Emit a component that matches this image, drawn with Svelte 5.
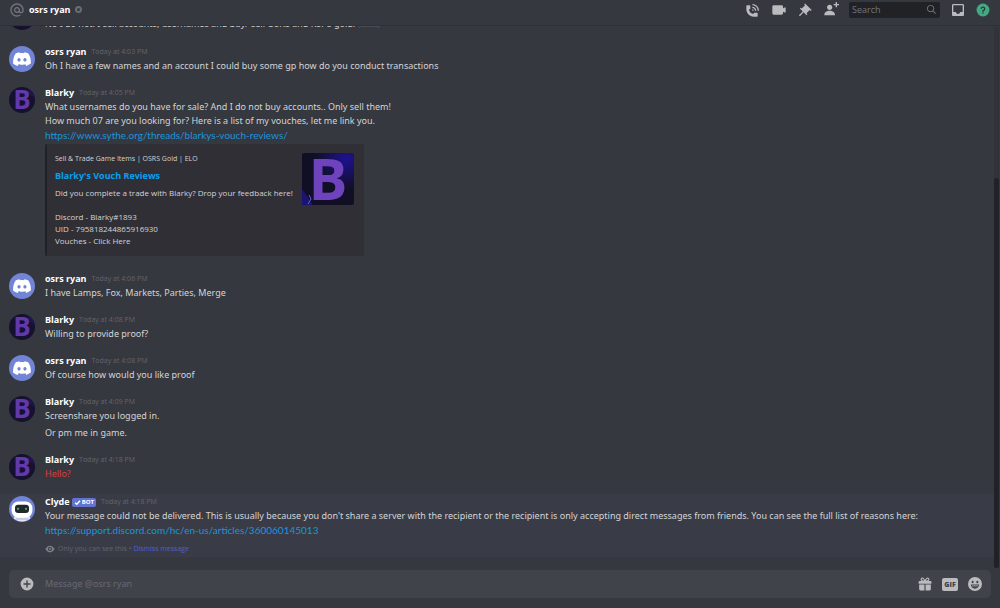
<script lang="ts">
  type Who = 'ryan' | 'blarky' | 'clyde';

  interface Message {
    who: Who;
    time?: string;
    lines: string[];
    link?: string;
    embed?: boolean;
    edited?: boolean;
    failed?: boolean;
    ephemeral?: boolean;
  }

  const names: Record<Who, string> = { ryan: 'osrs ryan', blarky: 'Blarky', clyde: 'Clyde' };

  const messages: Message[] = [
    // scrolled half way under the top bar, so it has no visible heading
    {
      who: 'blarky',
      lines: ['No I do not. I sell accounts, usernames and buy/ sell OSRS and RSPS gold.'],
      edited: true,
    },
    {
      who: 'ryan',
      time: '4:03 PM',
      lines: ['Oh I have a few names and an account I could buy some gp how do you conduct transactions'],
    },
    {
      who: 'blarky',
      time: '4:05 PM',
      lines: [
        'What usernames do you have for sale? And I do not buy accounts.. Only sell them!\nHow much 07 are you looking for? Here is a list of my vouches, let me link you.',
      ],
      link: 'https://www.sythe.org/threads/blarkys-vouch-reviews/',
      embed: true,
    },
    { who: 'ryan', time: '4:06 PM', lines: ['I have Lamps, Fox, Markets, Parties, Merge'] },
    { who: 'blarky', time: '4:08 PM', lines: ['Willing to provide proof?'] },
    { who: 'ryan', time: '4:08 PM', lines: ['Of course how would you like proof'] },
    { who: 'blarky', time: '4:09 PM', lines: ['Screenshare you logged in.', 'Or pm me in game.'] },
    { who: 'blarky', time: '4:18 PM', lines: ['Hello?'], failed: true },
    {
      who: 'clyde',
      time: '4:18 PM',
      lines: [
        "Your message could not be delivered. This is usually because you don't share a server with the recipient or the recipient is only accepting direct messages from friends. You can see the full list of reasons here:",
      ],
      link: 'https://support.discord.com/hc/en-us/articles/360060145013',
      ephemeral: true,
    },
  ];

  const actions = [
    {
      label: 'Start voice call',
      d: 'M11 5V3C16.515 3 21 7.486 21 13H19C19 8.589 15.411 5 11 5ZM17 13H15C15 10.795 13.206 9 11 9V7C14.309 7 17 9.691 17 13ZM11 11V13H13C13 11.896 12.105 11 11 11ZM14 16H18C18.553 16 19 16.447 19 17V21C19 21.553 18.553 22 18 22H13C6.925 22 2 17.075 2 11V6C2 5.447 2.448 5 3 5H7C7.553 5 8 5.447 8 6V10C8 10.553 7.553 11 7 11H6C6.063 14.938 9 18 13 18V17C13 16.447 13.447 16 14 16Z',
    },
    {
      label: 'Start video call',
      d: 'M21.526 8.149C21.231 7.966 20.862 7.951 20.553 8.105L18 9.382V7C18 5.897 17.103 5 16 5H4C2.897 5 2 5.897 2 7V17C2 18.104 2.897 19 4 19H16C17.103 19 18 18.104 18 17V14.618L20.553 15.894C20.694 15.965 20.847 16 21 16C21.183 16 21.365 15.949 21.526 15.851C21.82 15.668 22 15.347 22 15V9C22 8.653 21.82 8.332 21.526 8.149Z',
    },
    {
      label: 'Pinned messages',
      d: 'M22 12L12.101 2.101L10.686 3.514L12.101 4.929L7.151 9.878V9.88L5.736 8.465L4.322 9.88L8.565 14.122L2.908 19.778L4.322 21.192L9.979 15.536L14.222 19.778L15.636 18.364L14.222 16.95L19.171 12H19.172L20.586 13.414L22 12Z',
    },
    {
      label: 'Add friends to DM',
      d: 'M21 3H24V5H21V8H19V5H16V3H19V0H21V3ZM10 12C12.205 12 14 10.205 14 8C14 5.795 12.205 4 10 4C7.795 4 6 5.795 6 8C6 10.205 7.795 12 10 12ZM10 13C5.289 13 2 15.467 2 19V20H18V19C18 15.467 14.711 13 10 13Z',
    },
  ];

  let query = $state('');
  let draft = $state('');
</script>

{#snippet avatar(who: Who)}
  <svg class="avatar" viewBox="0 0 26 26" aria-hidden="true">
    {#if who === 'ryan'}
      <circle cx="13" cy="13" r="13" fill="#7284d6" />
      <path
        transform="translate(3.4 6.2) scale(.685)"
        fill="#fff"
        fill-rule="evenodd"
        d="M23 1.7C21.3.9 19.5.3 17.7 0L17 1.4C15 1.1 13 1.1 11 1.4L10.3 0C8.5.3 6.7.9 5 1.7C1.6 6.8.6 11.8 1.1 16.7C3.1 18.1 5.3 19.3 7.7 20L9.1 17.7C11 18.6 17 18.6 18.9 17.7L20.3 20C22.7 19.3 24.9 18.1 26.9 16.6C27.4 11 26 6 23 1.7ZM9.7 13.6C8.4 13.6 7.3 12.4 7.3 11S8.4 8.3 9.7 8.3S12 9.5 12 11S11 13.6 9.7 13.6ZM18.3 13.6C17 13.6 16 12.4 16 11S17 8.3 18.3 8.3S20.7 9.5 20.7 11S19.6 13.6 18.3 13.6Z"
      />
    {:else if who === 'blarky'}
      <circle cx="13" cy="13" r="13" fill="#15112f" />
      <path d="M18 1.1A13 13 0 0 1 25.8 11L21 8Z" fill="#1b1552" />
      <text x="13" y="22" text-anchor="middle" font-size="26" font-weight="700" fill="#6239aa">B</text>
    {:else}
      <circle cx="13" cy="13" r="13" fill="#7284d6" />
      <path d="M5 20.5H21V22.8A13 13 0 0 1 5 22.8Z" fill="#e4e7f2" />
      <rect x="2.6" y="5.5" width="20.8" height="16" rx="6.5" fill="#fff" />
      <rect x="6" y="8.8" width="14" height="8.2" rx="3.2" fill="#23272a" />
      <circle cx="9" cy="12.8" r="1.1" fill="#43b581" />
      <circle cx="17" cy="12.8" r="1.1" fill="#43b581" />
      <path d="M7 23H19" stroke="#9aa5dc" stroke-width=".8" />
    {/if}
  </svg>
{/snippet}

<div class="app">
  <header class="topbar">
    <svg class="at" viewBox="0 0 24 24" aria-hidden="true">
      <path
        d="M12 2C6.486 2 2 6.486 2 12C2 17.515 6.486 22 12 22C14.039 22 15.993 21.398 17.652 20.259L16.521 18.611C15.195 19.519 13.633 20 12 20C7.589 20 4 16.411 4 12C4 7.589 7.589 4 12 4C16.411 4 20 7.589 20 12V12.782C20 14.17 19.402 15 18.4 15C17.437 15 16.6 14.182 16.6 13.631V12C16.6 9.464 14.537 7.4 12 7.4C9.463 7.4 7.4 9.463 7.4 12C7.4 14.537 9.463 16.6 12 16.6C13.234 16.6 14.35 16.106 15.177 15.313C15.826 16.269 16.93 17 18.4 17C20.552 17 22 15.306 22 12.782V12C22 6.486 17.514 2 12 2ZM12 14.599C10.566 14.599 9.4 13.433 9.4 12C9.4 10.567 10.566 9.4 12 9.4C13.434 9.4 14.6 10.566 14.6 12C14.6 13.434 13.434 14.599 12 14.599Z"
      />
    </svg>
    <h1>osrs ryan</h1>
    <span class="status" role="img" aria-label="Offline"></span>

    <div class="tools">
      {#each actions as action (action.label)}
        <button type="button" aria-label={action.label}>
          <svg viewBox="0 0 24 24"><path d={action.d} /></svg>
        </button>
      {/each}
      <label class="search">
        <input type="text" placeholder="Search" aria-label="Search" bind:value={query} />
        <svg viewBox="0 0 24 24" aria-hidden="true">
          <path
            d="M21.707 20.293L16.314 14.9C17.403 13.504 18 11.799 18 10C18 5.6 14.4 2 10 2S2 5.6 2 10S5.6 18 10 18C11.799 18 13.504 17.404 14.9 16.314L20.293 21.706L21.707 20.293ZM10 16C6.7 16 4 13.3 4 10S6.7 4 10 4S16 6.7 16 10S13.3 16 10 16Z"
          />
        </svg>
      </label>
      <button type="button" aria-label="Inbox">
        <svg viewBox="0 0 24 24">
          <path
            d="M19 3H4.99C3.88 3 3.01 3.89 3.01 5L3 19C3 20.1 3.88 21 4.99 21H19C20.1 21 21 20.1 21 19V5C21 3.89 20.1 3 19 3ZM19 15H15C15 16.66 13.65 18 12 18C10.35 18 9 16.66 9 15H4.99V5H19V15Z"
          />
        </svg>
      </button>
      <button type="button" class="help" aria-label="Help">
        <svg viewBox="0 0 24 24">
          <circle cx="12" cy="12" r="11" />
          <path
            class="mark"
            d="M12 18.25A1.25 1.25 0 1 1 12 15.75A1.25 1.25 0 0 1 12 18.25ZM13 13.875V15H11V12H12C13.104 12 14 11.103 14 10C14 8.896 13.104 8 12 8C10.896 8 10 8.896 10 10H8C8 7.795 9.795 6 12 6C14.205 6 16 7.795 16 10C16 11.861 14.723 13.429 13 13.875Z"
          />
        </svg>
      </button>
    </div>
  </header>

  <main class="chat">
    <div class="log">
      {#each messages as msg, i (i)}
        <article class="message" class:ephemeral={msg.ephemeral} class:headless={!msg.time}>
          {@render avatar(msg.who)}
          <div class="body">
            {#if msg.time}
              <h2>
                <span class="author">{names[msg.who]}</span>
                {#if msg.who === 'clyde'}
                  <span class="bot">
                    <svg viewBox="0 0 10 10" aria-hidden="true"><path d="M1.5 5.2L4 7.6L8.6 2.4" /></svg>BOT
                  </span>
                {/if}
                <time>Today at {msg.time}</time>
              </h2>
            {/if}
            {#each msg.lines as line (line)}
              <p class="text" class:failed={msg.failed}>
                {line}{#if msg.edited}<small class="edited">(edited)</small>{/if}
              </p>
            {/each}
            {#if msg.link}
              <a class="url" href={msg.link}>{msg.link}</a>
            {/if}
            {#if msg.embed}
              <section class="embed">
                <div class="embed-text">
                  <span class="provider">Sell &amp; Trade Game Items | OSRS Gold | ELO</span>
                  <a class="title" href={msg.link}>Blarky's Vouch Reviews</a>
                  <p class="description">{'Did you complete a trade with Blarky? Drop your feedback here!\n\nDiscord - Blarky#1893\nUID - 795818244865916930\nVouches - Click Here'}</p>
                </div>
                <svg class="thumb" viewBox="0 0 52 52" role="img" aria-label="Blarky logo">
                  <defs>
                    <radialGradient id="glow" cx="0.85" cy="0.1" r="0.6">
                      <stop offset="0" stop-color="#1d1290" />
                      <stop offset="1" stop-color="#110f26" />
                    </radialGradient>
                  </defs>
                  <rect width="52" height="52" rx="2" fill="url(#glow)" />
                  <path d="M0 36L5 43L11 52H0Z" fill="#1c1474" />
                  <path d="M7 42L9 46L6 51" stroke="#6a5fd0" fill="none" />
                  <text x="26" y="47" text-anchor="middle" font-size="58" font-weight="700" fill="#6f43bd">B</text>
                </svg>
              </section>
            {/if}
            {#if msg.ephemeral}
              <div class="notice">
                <svg viewBox="0 0 24 24" aria-hidden="true">
                  <path
                    fill-rule="evenodd"
                    d="M12 4C5 4 1 12 1 12S5 20 12 20S23 12 23 12S19 4 12 4ZM12 17A5 5 0 1 1 12 7A5 5 0 0 1 12 17ZM12 14.5A2.5 2.5 0 1 0 12 9.5A2.5 2.5 0 0 0 12 14.5Z"
                  />
                </svg>
                <span>Only you can see this •</span>
                <button type="button">Dismiss message</button>
              </div>
            {/if}
          </div>
        </article>
      {/each}
    </div>
    <div class="scrollbar" aria-hidden="true"><div class="thumb-bar"></div></div>
  </main>

  <form class="composer">
    <button type="button" aria-label="Attach file">
      <svg viewBox="0 0 24 24">
        <path
          fill-rule="evenodd"
          d="M12 1A11 11 0 1 0 12 23A11 11 0 0 0 12 1ZM18 13.2H13.2V18H10.8V13.2H6V10.8H10.8V6H13.2V10.8H18Z"
        />
      </svg>
    </button>
    <input type="text" placeholder="Message @osrs ryan" aria-label="Message @osrs ryan" bind:value={draft} />
    <button type="button" aria-label="Send a gift">
      <svg viewBox="0 0 24 24">
        <path d="M2 13H11V23H4Q2 23 2 21ZM13 13H22V21Q22 23 20 23H13ZM2.5 7H21.5Q23 7 23 8.5V11.5H1V8.5Q1 7 2.5 7Z" />
        <path d="M11.5 7C6 7 5 5 5.5 3.3C6.3 1 10.5 1.5 11.5 7ZM12.5 7C18 7 19 5 18.5 3.3C17.7 1 13.5 1.5 12.5 7Z" fill="none" stroke="currentColor" stroke-width="2" />
      </svg>
    </button>
    <button type="button" class="gif" aria-label="Open GIF picker">GIF</button>
    <button type="button" aria-label="Select emoji">
      <svg viewBox="0 0 24 24">
        <path
          fill-rule="evenodd"
          d="M12 0A12 12 0 1 0 12 24A12 12 0 0 0 12 0ZM8 6.5A1.7 1.9 0 1 1 8 10.5A1.7 1.9 0 1 1 8 6.5ZM16 6.5A1.7 1.9 0 1 1 16 10.5A1.7 1.9 0 1 1 16 6.5ZM4.8 13H19.2C19 17 16 20 12 20S5 17 4.8 13ZM7 14.5V16H17V14.5Z"
        />
      </svg>
    </button>
  </form>
</div>

<style>
  :global(body) {
    margin: 0;
    background: #36383f;
  }
  .app {
    --ink: #d3d4d7;
    --muted: #62656d;
    --icon: #b9bbbe;
    --link: #1b95dc;
    display: flex;
    flex-direction: column;
    height: 100vh;
    color: var(--ink);
    font: 9px/14px 'Open Sans', 'Noto Sans', sans-serif;
    background: #36383f;
  }
  h1,
  h2,
  p {
    margin: 0;
    font-size: inherit;
    font-weight: inherit;
  }
  button {
    display: grid;
    place-items: center;
    padding: 0;
    color: var(--icon);
    font: inherit;
    background: none;
    border: 0;
    cursor: pointer;
  }
  input {
    min-width: 0;
    padding: 0;
    color: var(--ink);
    font: inherit;
    background: none;
    border: 0;
    outline: 0;
  }
  svg {
    display: block;
    flex: none;
    fill: currentColor;
  }
  a {
    color: var(--link);
    text-decoration: none;
  }

  .topbar {
    display: flex;
    flex: none;
    align-items: center;
    box-sizing: border-box;
    height: 26px;
    padding: 0 10px 6px 9px;
    border-bottom: 1px solid #2e3036;
  }
  .at {
    width: 16px;
    height: 16px;
    color: #72757e;
  }
  h1 {
    margin-left: 4px;
    color: #fff;
    font-weight: 700;
  }
  .status {
    width: 3px;
    height: 3px;
    margin-left: 4px;
    border: 2px solid #686c75;
    border-radius: 50%;
  }
  .tools {
    display: flex;
    align-items: center;
    gap: 10px;
    margin-left: auto;
  }
  .tools svg {
    width: 16px;
    height: 16px;
  }
  .search {
    display: flex;
    align-items: center;
    box-sizing: border-box;
    width: 91px;
    height: 16px;
    padding: 0 3px;
    color: #72757e;
    background: #212226;
    border-radius: 2px;
  }
  .search input {
    flex: 1;
  }
  .search svg {
    width: 11px;
    height: 11px;
  }
  input::placeholder {
    color: #72757e;
    opacity: 1;
  }
  .help {
    color: #43a983;
  }
  .tools .help svg {
    width: 14px;
    height: 14px;
  }
  .mark {
    fill: #2c3038;
  }

  .chat {
    display: flex;
    flex: 1;
    min-height: 0;
  }
  .log {
    display: flex;
    flex: 1;
    flex-direction: column;
    justify-content: flex-end;
    gap: 13px;
    min-width: 0;
    padding-bottom: 12px;
    overflow: hidden;
  }
  .message {
    display: flex;
    flex: none;
    gap: 10px;
    padding-left: 9px;
  }
  .message.ephemeral {
    padding-top: 1px;
    padding-bottom: 2px;
    background: #393c46;
  }
  .message.headless {
    align-items: flex-end;
  }
  .headless .avatar {
    margin-bottom: 2px;
  }
  .avatar {
    width: 26px;
    height: 26px;
    margin-top: 1px;
  }
  .body {
    flex: 1;
    min-width: 0;
  }
  h2 {
    display: flex;
    align-items: center;
    height: 14px;
  }
  .author {
    color: #fff;
    font-weight: 700;
  }
  time {
    margin-left: 5px;
    color: var(--muted);
    font-size: 7px;
  }
  .bot {
    display: flex;
    align-items: center;
    gap: 1px;
    height: 9px;
    margin-left: 2px;
    padding: 0 2px;
    color: #fff;
    font-size: 6px;
    font-weight: 700;
    background: #6373d0;
    border-radius: 2px;
  }
  .bot svg {
    width: 7px;
    height: 7px;
    fill: none;
    stroke: currentColor;
    stroke-width: 2;
  }
  .text {
    font-family: 'Noto Sans', sans-serif;
    white-space: pre-line;
  }
  .text + .text {
    margin-top: 3px;
  }
  .failed {
    color: #d8403f;
  }
  .edited {
    margin-left: 3px;
    color: var(--muted);
    font-size: 6px;
  }
  .url {
    display: block;
    width: fit-content;
    font-family: Lato, sans-serif;
    font-size: 10px;
  }

  .embed {
    display: flex;
    box-sizing: border-box;
    width: fit-content;
    gap: 9px;
    margin: 2px 0 3px;
    padding: 9px 10px 9px 8px;
    background: #302f36;
    border-left: 2px solid #212226;
    border-radius: 2px;
  }
  .embed-text {
    display: flex;
    flex-direction: column;
  }
  .provider {
    font-size: 7px;
    line-height: 12px;
  }
  .title {
    margin-top: 4px;
    color: #06a0f0;
    font-weight: 700;
  }
  .description {
    margin-top: 4px;
    font-size: 8px;
    line-height: 12px;
    white-space: pre-line;
  }
  .thumb {
    width: 52px;
    height: 52px;
  }

  .notice {
    display: flex;
    align-items: center;
    gap: 2px;
    height: 12px;
    margin-top: 6px;
    color: var(--muted);
    font-size: 7px;
  }
  .notice svg {
    width: 10px;
    height: 10px;
    margin-right: 1px;
    color: #7c7f88;
  }
  .notice button {
    color: #5260cf;
  }

  .scrollbar {
    display: flex;
    flex: none;
    flex-direction: column;
    justify-content: flex-end;
    width: 5px;
    margin: 1px 1px 1px 0;
    background: #32333a;
    border-radius: 3px;
  }
  .thumb-bar {
    height: 72%;
    background: #212228;
    border-radius: 3px;
  }

  .composer {
    display: flex;
    flex: none;
    align-items: center;
    gap: 10px;
    height: 28px;
    margin: 1px 9px 10px;
    padding: 0 9px 0 11px;
    background: #40434a;
    border-radius: 5px;
  }
  .composer input {
    flex: 1;
    margin-left: 1px;
    font-family: 'Noto Sans', sans-serif;
  }
  .composer input::placeholder {
    color: #666973;
  }
  .composer svg {
    width: 14px;
    height: 14px;
  }
  .composer .gif {
    width: 16px;
    height: 13px;
    color: #40434a;
    font-size: 7px;
    font-weight: 800;
    line-height: 13px;
    background: var(--icon);
    border-radius: 2px;
  }
</style>
